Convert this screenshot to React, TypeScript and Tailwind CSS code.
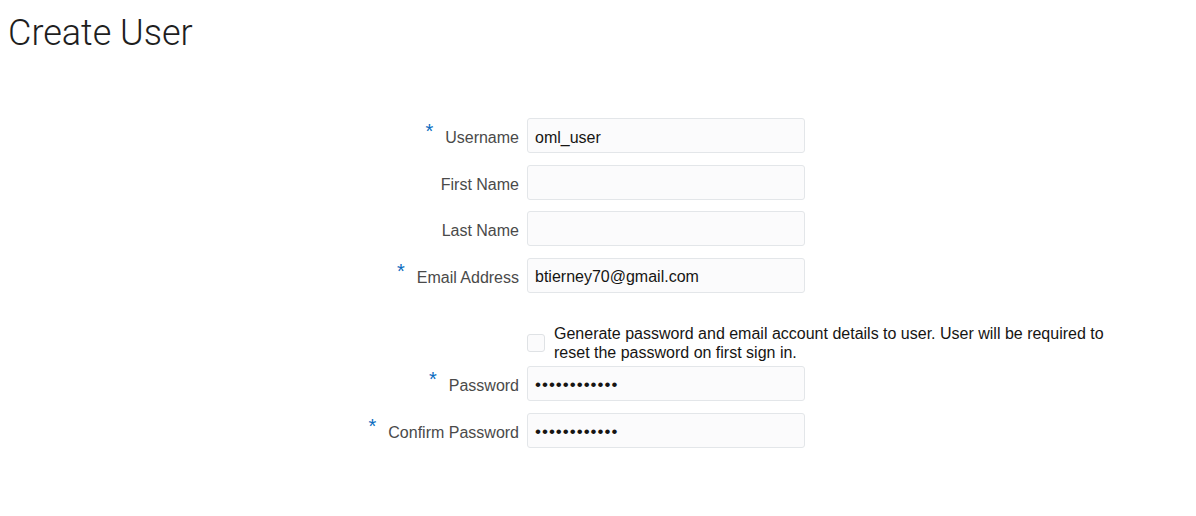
import React from 'react';

type Field = {
  label: string;
  value: string;
  required?: boolean;
  password?: boolean;
};

const TOP_FIELDS: Field[] = [
  { label: 'Username', value: 'oml_user', required: true },
  { label: 'First Name', value: '' },
  { label: 'Last Name', value: '' },
  { label: 'Email Address', value: 'btierney70@gmail.com', required: true },
];

const PASSWORD_FIELDS: Field[] = [
  { label: 'Password', value: '••••••••••••', required: true, password: true },
  { label: 'Confirm Password', value: '••••••••••••', required: true, password: true },
];

const FieldRow: React.FC<{ field: Field }> = ({ field }) => (
  <div className="flex items-center">
    <div className="w-[519px] flex justify-end items-center pt-[5px]">
      {field.required && (
        <span className="text-[#0a6bc0] text-[20px] leading-none mr-[12px] -mt-[14px]">*</span>
      )}
      <label className="text-[16px] text-[#4a4a4a]">{field.label}</label>
    </div>
    <div className="ml-2 w-[278px] h-[35px] rounded-[3px] border border-[#e3e6e9] bg-[#fbfbfc] flex items-center px-[7px] pt-[4px]">
      {field.password ? (
        <span className="text-[17px] tracking-[1px] text-[#161513] -mt-[2px]">{field.value}</span>
      ) : (
        <span className="text-[16px] text-[#161513]">{field.value}</span>
      )}
    </div>
  </div>
);

export default function App() {
  return (
    <div className="w-[1196px] h-[516px] bg-white font-['Liberation_Sans',Arial,sans-serif] overflow-hidden">
      <h1 className="pl-[8px] pt-[12px] text-[36px] font-light text-[#1e1e1e] font-['Roboto',sans-serif] leading-[42px]">
        Create User
      </h1>

      <div className="mt-[64px] flex flex-col gap-y-[11.67px]">
        {TOP_FIELDS.map((f) => (
          <FieldRow key={f.label} field={f} />
        ))}
      </div>

      <div className="mt-[30px] flex items-center">
        <div className="w-[519px]" />
        <div className="ml-2 w-[18px] h-[18px] rounded-[3px] border border-[#dfe2e5] bg-[#fbfbfc] shrink-0" />
        <p className="ml-[9px] pt-[1px] pb-[1px] w-[570px] text-[16px] leading-[19.5px] text-[#161513]">
          Generate password and email account details to user. User will be required to reset the password on first sign in.
        </p>
      </div>

      <div className="mt-[2px] flex flex-col gap-y-[12px]">
        {PASSWORD_FIELDS.map((f) => (
          <FieldRow key={f.label} field={f} />
        ))}
      </div>
    </div>
  );
}
